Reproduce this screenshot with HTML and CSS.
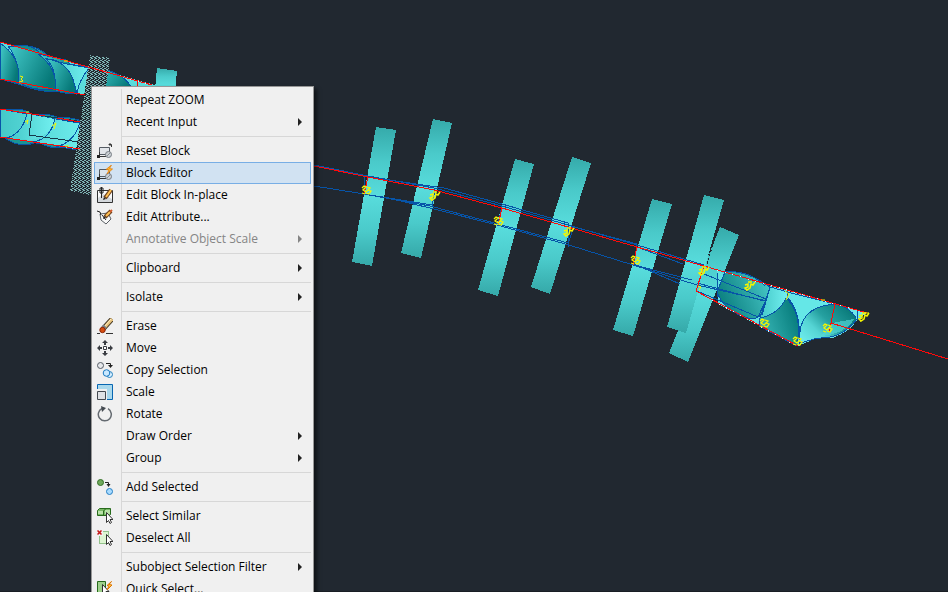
FILE: index.html
```
<!DOCTYPE html>
<html lang="en">
<head>
<meta charset="utf-8">
<title>Drawing</title>
<link rel="stylesheet" href="styles.css">
</head>
<body>
<main class="workspace">
<svg class="drawing" viewBox="0 0 948 592" preserveAspectRatio="xMinYMin slice" aria-hidden="true">
  <defs>
    <linearGradient id="slab" x1="0" y1="0" x2="0" y2="1"><stop offset="0" stop-color="#35aaaa"/><stop offset=".25" stop-color="#4acaca"/><stop offset=".5" stop-color="#58dcdc"/><stop offset=".75" stop-color="#4acaca"/><stop offset="1" stop-color="#35a8a8"/></linearGradient>
    <linearGradient id="blade" x1="0" y1="0" x2="1" y2=".5"><stop offset="0" stop-color="#45cccc"/><stop offset="1" stop-color="#067878"/></linearGradient>
    <linearGradient id="bladeRev" x1="0" y1=".6" x2="1" y2=".2"><stop offset="0" stop-color="#087d7d"/><stop offset=".5" stop-color="#28a1a1"/><stop offset="1" stop-color="#48c9c9"/></linearGradient>
    <linearGradient id="fin" x1="0" y1="1" x2="1" y2=".6"><stop offset="0" stop-color="#3fbebe"/><stop offset="1" stop-color="#0a8080"/></linearGradient>
    <linearGradient id="pale" x1="0" y1="0" x2="1" y2="0"><stop offset="0" stop-color="#45c8c8"/><stop offset="1" stop-color="#72f0f0"/></linearGradient>
    <linearGradient id="cone" x1="0" y1="1" x2="1" y2=".3"><stop offset="0" stop-color="#72f0f0"/><stop offset=".35" stop-color="#55d4d4"/><stop offset=".6" stop-color="#25a0a0"/><stop offset="1" stop-color="#087878"/></linearGradient>
    <pattern id="dither" width="4" height="4" patternUnits="userSpaceOnUse"><path fill="#212830" d="M0 0h4v4H0z"/><path fill="#7fb5b5" d="M0 0h2v1H0zM2 1h2v1H2zM0 2h1v1H0zM2 3h1v1H2zM3 2h1v1H3z"/></pattern>
    <g id="mark" fill="none" stroke="#f5f500" stroke-width="1.300"><path d="M-4-2l2-2 2 1-3 3 3 2 2-2M1-3l3 1-2 2 3 1-2 3-3-1M-4 3l3 1"/></g>
    <g id="hook" fill="none" stroke="#f5f500" stroke-width="1.500"><path d="M-3-1l3-1v3l-3 1 2 2 3-2 1-4 2 1 2-3M0-4h4M-2 4h2"/></g>
  </defs>

  <g shape-rendering="crispEdges">
    <path fill="url(#slab)" d="M157 68l20 3-3 30h-20z"/>
    <path fill="url(#slab)" d="M376 127l20 3-24 136-20-4z"/>
    <path fill="url(#slab)" d="M433 119l19 4-31 135-20-5z"/>
    <path fill="url(#slab)" d="M515 159l19 5-36 132-20-6z"/>
    <path fill="url(#slab)" d="M572 157l19 6-41 131-19-7z"/>
    <path fill="url(#slab)" d="M652 199l20 5-39 132-20-6z"/>
    <path fill="url(#slab)" d="M720 227l19 8-51 127-19-9z"/>
    <path fill="url(#slab)" d="M704 195l20 5-38 133-19-6z"/>
    <path stroke="#212830" stroke-dasharray="2 2" d="M718 227l-11 37"/>
  </g>

  <g stroke="#0754a8" shape-rendering="crispEdges">
    <path fill="#5bdcdc" stroke="none" d="M0 42l90 25 40 11 25 7-5 15-65-5L0 79z"/>
    <path fill="url(#blade)" d="M20 46q18-2 30 12 8 10 5 34-16 0-37-8 2-23-10-38z"/>
    <path fill="url(#blade)" d="M0 43q23 16 18 41L0 79z"/>
    <path fill="url(#blade)" d="M38 54q20 14 17 36l21 3q3-22-10-33z"/>
    <path fill="url(#pale)" d="M46 59q22-1 31 34 2-13 13-26l-23-3z"/>
    <path fill="url(#blade)" d="M46 59q27 2 30 35-8 0-21-3 2-23-9-32z"/>
    <path fill="url(#blade)" d="M92 68q26 1 38 17v15H92z"/>
    <path fill="#178c8c" d="M14 46q16-3 25 6M67 64l23 4M22 84q12 7 32 5"/>
    <path fill="url(#pale)" d="M0 109l90 16v27L0 137z"/>
    <path fill="#1b9494" d="M5 110q19-3 26 4M35 115q15-3 28 5m-8-2q20-2 32 6M5 138q15 11 32 4m3 1q15 8 28 3"/>
    <path fill="url(#pale)" stroke="none" d="M28 114l27 5q-5 18-26 21l-20-3q15-5 19-23z"/>
    <path fill="none" d="M27 113q-4 20-20 25M55 118q-4 21-22 24M80 122q-5 20-24 25"/>
    <path fill="none" stroke="#16384a" d="M90 123l-58-9-3 21 50 7"/>
  </g>
  <path fill="url(#dither)" shape-rendering="crispEdges" d="M90 55l20 3-19 137-21-4z"/>
  <g fill="none" stroke="#ff0909" shape-rendering="crispEdges">
    <path d="M0 42l152 43M0 79l85 16M0 109l45 7m12 2l23 4M0 137l80 12M137 81v12"/>
  </g>

  <g shape-rendering="crispEdges">
    <path fill="#62e1e1" d="M717 271l150 42-10 7q-6 11-24 18l-35 8-80-42z"/>
    <path fill="#212830" d="M800 345l20-8 14 1-20 10z"/>
    <path fill="url(#bladeRev)" stroke="#0754a8" d="M725 272q20-3 45 15l-2 19q-7 12-16 13-27-6-35-27z"/>
    <path fill="url(#pale)" stroke="#0754a8" d="M770 287l18 5q-2 25-28 26z"/>
    <path fill="url(#fin)" stroke="#0754a8" d="M786 298q17 16 11 48l-38-20 1-8q19-4 26-20z"/>
    <path fill="#65e7e7" stroke="#0754a8" d="M787 292l48 12q-32 5-36 41 3-33-12-48z"/>
    <path fill="url(#cone)" stroke="#0754a8" d="M800 343q-4-36 35-39 15 3 22 15-15 20-39 19z"/>
    <path fill="#55d8d8" d="M832 323l22-4q-9 15-33 17z" opacity=".65"/>
    <path fill="#6ee9e9" d="M846 307l21 6-10 7q-2-7-11-13z"/>
    <path fill="none" stroke="#0754a8" d="M725 272q25-2 40 14M857 310v10"/>
  </g>

  <g fill="none" stroke="#0754a8" shape-rendering="crispEdges">
    <path d="M314 165l54 11 66 12 68 18 66 19 69 20 67 20M314 186l50 8 68 11M368 177l76 11 58 16 66 19v20l-70-19-68-18-66-12M364 177v17M435 189l-3 18M384 197l50 12 63 16 72 20 64 20 64 20 70 16M568 247v-20l6 0 63 17-3 21 58 15M502 206l-4 18M574 226l-6 18M637 247l46 17M634 264l46 20"/>
    <path d="M704 274l62 25M697 283l67 18M697 291l61 26 7-15M717 273v24M770 287l-8 28"/>
  </g>
  <g fill="none" stroke="#ff0909" shape-rendering="crispEdges">
    <path d="M314 166l54 11 66 13 68 18 66 19 69 20 67 19 163 47M368 177l-4 17M502 208l-4 17M637 247l-4 18M704 266l-8 25 102 55M835 304l-6 28M831 323l117 36"/>
  </g>
  <g fill="none" stroke="#d4ffff" stroke-dasharray="1 7" shape-rendering="crispEdges"><path d="M717 270l136 39M712 300l82 45M130 79l20 6"/></g>
  <g>
    <use href="#mark" x="366" y="190"/><use href="#hook" x="433" y="196"/><use href="#mark" x="498" y="221"/><use href="#hook" x="567" y="232"/><use href="#mark" x="635" y="260"/><use href="#hook" x="702" y="271"/><use href="#hook" x="748" y="286"/><use href="#mark" x="764" y="323"/><use href="#mark" x="797" y="341"/><use href="#mark" x="827" y="328"/><use href="#hook" x="862" y="317"/>
    <path fill="none" stroke="#f5f500" d="M698 286l3 1-2 3M785 291l4 3-3 6M821 300h4M864 313h5M20 76l3 1-2 2 2 2-4 1M64 61h4M65 146h4M25 122l3-2-1 4M52 126l4-3-2 6M26 112h3"/>
  </g>
  <path fill="#191e24" d="M314 591h634v1H314zM0 591h91v1H0z"/>
</svg>

<nav class="menu" aria-label="Selection menu">
  <button class="item"><span class="icon"></span><span>Repeat ZOOM</span></button>
  <button class="item more"><span class="icon"></span><span>Recent Input</span></button>
  <hr>
  <button class="item"><svg class="icon" viewBox="0 0 16 16"><path fill="#e2e5e9" stroke="#555b63" d="M2.500 4.500h10v7h-10z"/><path fill="none" stroke="#333" d="M2.500 9v5M1 13.500h8M12 1.500h2.500V4M12 1.500l1.500-1.500M12 1.500L13.500 3"/><circle cx="11.500" cy="11.500" r="3" fill="#ccd0d4" stroke="#777d84"/><path fill="none" stroke="#8a9096" d="M10 13l4-4"/><path fill="#222" d="M0 12h3v3H0z"/></svg><span>Reset Block</span></button>
  <button class="item current"><svg class="icon" viewBox="0 0 16 16"><path fill="#dce3ea" stroke="#555b63" d="M2.500 4.500h10v7h-10z"/><path fill="none" stroke="#333" d="M2.500 9v5M1 13.500h8"/><circle cx="11.500" cy="11.500" r="3" fill="#ccd0d4" stroke="#777d84"/><path fill="none" stroke="#8a9096" d="M10 13l4-4"/><path fill="#222" d="M0 12h3v3H0z"/><path fill="#ffb62e" stroke="#df7500" stroke-width=".7" d="M14.500 0L9 4.500l3 .5-2 4 5.500-5-3-.5z"/></svg><span>Block Editor</span></button>
  <button class="item"><svg class="icon" viewBox="0 0 16 16"><path fill="#fafafa" stroke="#333" d="M.500 3.500h15v12H.500z"/><path fill="#d4d8dc" d="M1 11l5-4 9 5v3H1z"/><path fill="none" stroke="#222" d="M4.500 0v11M3 1h3v5H3z"/><path stroke="#6e421d" stroke-width="4" d="M8 11l6-8"/><path stroke="#ffc052" stroke-width="2" d="M9 10l5-7"/><path fill="#222" d="M6 13l1-3 2 2z"/></svg><span>Edit Block In-place</span></button>
  <button class="item"><svg class="icon" viewBox="0 0 16 16"><path fill="#f8f8f8" stroke="#5b6065" d="M3 5l8-1 3 6-5 5-5-4z"/><path fill="none" stroke="#222" d="M0 2l3 1 1 3M5 6l4 5"/><path stroke="#6e421d" stroke-width="4" d="M8 8l6-6"/><path stroke="#ffc052" stroke-width="2" d="M9 7l4-4"/><path stroke="#d55c2a" stroke-width="2" d="M13 3l2-2"/><path fill="#222" d="M6 10l1-3 2 2z"/></svg><span>Edit Attribute...</span></button>
  <button class="item more" disabled><span class="icon"></span><span>Annotative Object Scale</span></button>
  <hr>
  <button class="item more"><span class="icon"></span><span>Clipboard</span></button>
  <hr>
  <button class="item more"><span class="icon"></span><span>Isolate</span></button>
  <hr>
  <button class="item"><svg class="icon" viewBox="0 0 16 16"><path stroke="#333" d="M0 15.500h3M9 15.500h7"/><path stroke="#493c28" stroke-width="5" d="M6 11l9-10"/><path stroke="#e9c37c" stroke-width="3" d="M7 10l8-9"/><path stroke="#fff0c6" d="M7 9l7-8"/><path stroke="#777f88" stroke-width="4" d="M6 10l2-2"/><circle cx="5.500" cy="12" r="2.700" fill="#d64d10" stroke="#8d2606"/></svg><span>Erase</span></button>
  <button class="item"><svg class="icon" viewBox="0 0 16 16"><path fill="#fff" stroke="#3a3d42" d="M6.500 6.500h3v3h-3z"/><path fill="#3a3d42" d="M8 0l3 3H9v2H7V3H5zM8 16l-3-3h2v-2h2v2h2zM0 8l3-3v2h2v2H3v2zM16 8l-3 3V9h-2V7h2V5z"/></svg><span>Move</span></button>
  <button class="item"><svg class="icon" viewBox="0 0 16 16"><circle cx="3.500" cy="3.500" r="3" fill="#e6e8eb" stroke="#555c65"/><circle cx="12.500" cy="12.500" r="3" fill="#d7efff" stroke="#2680bd"/><circle cx="9.500" cy="11" r="3.300" fill="#cae9ff" stroke="#1c7ac1"/><path fill="none" stroke="#222" d="M9 1.500h4.500V5"/><path fill="#222" d="M11 3h5l-2.500 3z"/></svg><span>Copy Selection</span></button>
  <button class="item"><svg class="icon" viewBox="0 0 16 16"><path fill="#a9d8ec" stroke="#0867b2" d="M.500.500h15v15H.500z"/><path fill="#f0f0f0" d="M0 5h10v11H0z"/><path fill="#dfe2e5" stroke="#444a50" d="M.500 7.500h8v8h-8z"/></svg><span>Scale</span></button>
  <button class="item"><svg class="icon" viewBox="0 0 16 16"><path fill="none" stroke="#646a70" stroke-width="1.500" d="M5 2.500A6.500 6.500 0 1 0 11 2.700"/><path fill="#444a50" d="M4 0l5 2-4 4z"/></svg><span>Rotate</span></button>
  <button class="item more"><span class="icon"></span><span>Draw Order</span></button>
  <button class="item more"><span class="icon"></span><span>Group</span></button>
  <hr>
  <button class="item"><svg class="icon" viewBox="0 0 16 16"><circle cx="3.500" cy="3.500" r="3" fill="#70a95b" stroke="#347026"/><circle cx="12.500" cy="12.500" r="3" fill="#a9dbff" stroke="#247fc4"/><path fill="none" stroke="#222" d="M8 3.500h3.500V7"/><path fill="#222" d="M9.500 5h4l-2 3z"/></svg><span>Add Selected</span></button>
  <hr>
  <button class="item"><svg class="icon" viewBox="0 0 16 16"><path fill="#79b966" stroke="#286b1c" d="M.500 2.500l2-2h11v6l-1 1H.500z"/><path fill="#b9e2a8" d="M1 3h5v3H1zM8 2h5v4H8z"/><path fill="none" stroke="#286b1c" d="M6.500 7V3l2-2"/><path fill="#fff" stroke="#333" d="M9.500 4.500v10l2-2 1.500 3 1.500-1-1.500-3h3z"/></svg><span>Select Similar</span></button>
  <button class="item"><svg class="icon" viewBox="0 0 16 16"><path fill="#ddf5d2" stroke="#419334" stroke-dasharray="1 1" d="M2.500 1.500h9v12h-9z"/><path fill="#f0f0f0" d="M0 0h6v6H0z"/><path stroke="#c41616" stroke-width="1.500" d="M.500.500l4 4M4.500.500l-4 4"/><path fill="#fff" stroke="#333" d="M9.500 4.500v10l2-2 1.500 3 1.500-1-1.500-3h3z"/></svg><span>Deselect All</span></button>
  <hr>
  <button class="item more"><span class="icon"></span><span>Subobject Selection Filter</span></button>
  <button class="item"><svg class="icon" viewBox="0 0 16 16"><path fill="#9ed08b" stroke="#286b1c" d="M.500.500h8v15h-8z"/><path fill="#fff" stroke="#333" d="M5.500 3.500v10l2-2 1.500 3 1.500-1-1.500-3h3z"/><path fill="#ffca42" stroke="#df7500" d="M14.500.500L10 4.500l2 .5-2 4 5-5-3-.5z"/></svg><span>Quick Select...</span></button>
</nav>
</main>
</body>
</html>
```
FILE: styles.css
```
* { box-sizing: border-box; }
body { margin: 0; background: #212830; overflow: hidden; }
.workspace { position: relative; min-height: 100vh; }
.drawing { display: block; width: 100%; height: 100vh; }
.menu {
  position: absolute;
  left: 91px;
  top: 86px;
  width: 223px;
  padding: 2px;
  border: 1px solid #979797;
  background: linear-gradient(90deg, #f0f0f0 27px, #d7d7d7 27px, #d7d7d7 28px, #f0f0f0 28px) content-box, #f0f0f0;
  box-shadow: 3px 3px 4px #0008;
}
.item {
  display: flex;
  align-items: center;
  gap: 13px;
  width: 100%;
  height: 22px;
  padding: 0 8px 0 2px;
  border: 1px solid transparent;
  background: transparent;
  color: #000;
  font: 12px/20px "Open Sans", "Noto Sans", sans-serif;
  text-align: left;
  white-space: nowrap;
}
.icon { flex: none; width: 16px; height: 16px; }
.more::after {
  content: "";
  margin-left: auto;
  border: 4px solid transparent;
  border-left-color: #222;
  border-right: 0;
}
.item:disabled { color: #858585; }
.item:disabled::after { border-left-color: #858585; }
.current {
  border-color: #78aee5;
  background: linear-gradient(90deg, transparent 26px, #b9cde0 26px, #b9cde0 27px, transparent 27px), #d1e2f2;
}
hr { height: 1px; margin: 3px 0 3px 28px; border: 0; background: #d7d7d7; }
```
